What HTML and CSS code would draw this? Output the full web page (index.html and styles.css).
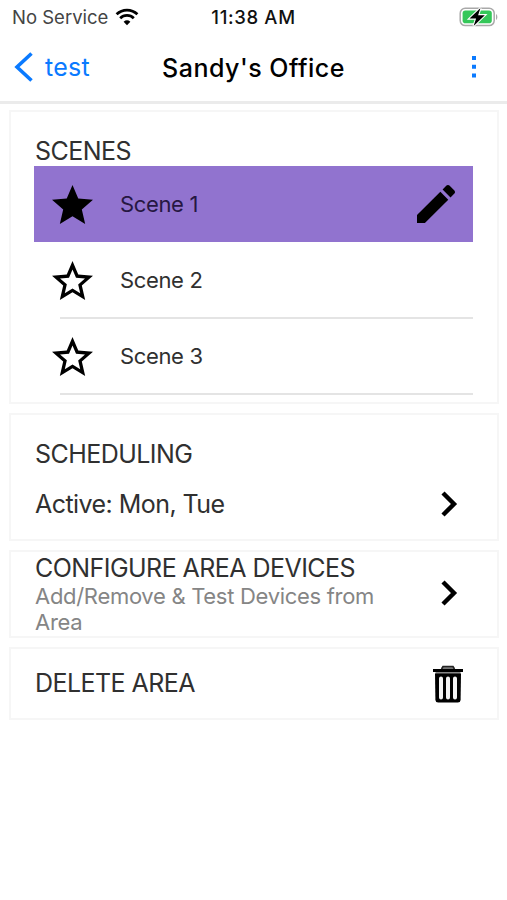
FILE: index.html
```html
<!DOCTYPE html>
<html lang="en">
<head>
    <meta charset="UTF-8">
    <meta name="viewport" content="width=device-width, initial-scale=1.0">
    <title>Sandy's Office</title>
    <link rel="stylesheet" href="styles.css">
</head>
<body>
    <!-- Status Bar -->
    <div class="status-bar">
        <div class="carrier">
            <span class="carrier-name">No Service</span>
            <svg class="wifi" width="24" height="18" viewBox="0 0 24 18">
                <path d="M1.6 6.3A15 15 0 0 1 22.4 6.3M5.2 10.2A9.8 9.8 0 0 1 18.8 10.2" fill="none" stroke="#000" stroke-width="2.8"/>
                <path d="M12 17.2L8.6 13.8A5.2 5.2 0 0 1 15.4 13.8Z"/>
            </svg>
        </div>
        <span class="time">11:38 AM</span>
        <svg class="battery" width="40" height="22" viewBox="0 0 40 22">
            <rect x="1.2" y="2.2" width="34" height="17.4" rx="5" fill="#fff" stroke="#a9a9a9" stroke-width="1.5"/>
            <rect x="3.6" y="4.6" width="29.2" height="12.6" rx="2.8" fill="#34c759"/>
            <path d="M37 8v6c1.8-.8 1.8-5.2 0-6z" fill="#a9a9a9"/>
            <path d="M21.5 2L10.5 12.6h6.6L14.6 20 25.8 9.2h-6.7z" stroke="#fff" stroke-width="2.2" paint-order="stroke"/>
        </svg>
    </div>

    <!-- Navigation -->
    <div class="navbar">
        <a class="back">
            <svg width="20" height="32" viewBox="0 0 20 32">
                <path d="M17.5 2.5L3 16l14.5 13.5" fill="none" stroke="#0a7aff" stroke-width="3.6"/>
            </svg>
            <span>test</span>
        </a>
        <h1>Sandy's Office</h1>
        <svg class="more" width="6" height="24" viewBox="0 0 6 24">
            <path d="M1 1h4v4H1zM1 9.7h4v4H1zM1 18.4h4v4H1z" fill="#0a7aff"/>
        </svg>
    </div>

    <div class="content">
        <!-- Scenes -->
        <div class="card scenes">
            <h2>SCENES</h2>
            <ul>
                <li class="scene active">
                    <svg class="star" width="41" height="39" viewBox="2 2 20 19">
                        <path d="M12 17.27L18.18 21l-1.63-7.03L22 9.24l-7.19-.61L12 2 9.19 8.63 2 9.24l5.46 4.73L5.82 21z"/>
                    </svg>
                    <span>Scene 1</span>
                    <svg class="pencil" width="38" height="38" viewBox="3 3 18 18">
                        <path d="M3 17.25V21h3.75L17.81 9.94l-3.75-3.75zM20.71 7.04c.39-.39.39-1.02 0-1.41l-2.34-2.34c-.39-.39-1.02-.39-1.41 0l-1.83 1.83 3.75 3.75z"/>
                    </svg>
                </li>
                <li class="scene">
                    <svg class="star" width="41" height="39" viewBox="2 2 20 19">
                        <path d="M22 9.24l-7.19-.62L12 2 9.19 8.63 2 9.24l5.46 4.73L5.82 21 12 17.27 18.18 21l-1.63-7.03zM12 15.4l-3.76 2.27 1-4.28-3.32-2.88 4.38-.38L12 6.1l1.71 4.04 4.38.38-3.32 2.88 1 4.28z"/>
                    </svg>
                    <span>Scene 2</span>
                </li>
                <li class="scene">
                    <svg class="star" width="41" height="39" viewBox="2 2 20 19">
                        <path d="M22 9.24l-7.19-.62L12 2 9.19 8.63 2 9.24l5.46 4.73L5.82 21 12 17.27 18.18 21l-1.63-7.03zM12 15.4l-3.76 2.27 1-4.28-3.32-2.88 4.38-.38L12 6.1l1.71 4.04 4.38.38-3.32 2.88 1 4.28z"/>
                    </svg>
                    <span>Scene 3</span>
                </li>
            </ul>
        </div>

        <!-- Scheduling -->
        <div class="card scheduling">
            <h2>SCHEDULING</h2>
            <div class="row">
                <p class="days">Active: Mon, Tue</p>
                <svg class="chevron" width="18" height="26" viewBox="0 0 18 26">
                    <path d="M3 2l11 11L3 24" fill="none" stroke="#000" stroke-width="4.4"/>
                </svg>
            </div>
        </div>

        <!-- Configure -->
        <div class="card configure">
            <div class="configure-text">
                <h2>CONFIGURE AREA DEVICES</h2>
                <p>Add/Remove &amp; Test Devices from Area</p>
            </div>
            <svg class="chevron" width="18" height="26" viewBox="0 0 18 26">
                <path d="M3 2l11 11L3 24" fill="none" stroke="#000" stroke-width="4.4"/>
            </svg>
        </div>

        <!-- Delete -->
        <div class="card delete">
            <h2>DELETE AREA</h2>
            <svg class="trash" width="30" height="38" viewBox="0 0 30 38">
                <path d="M8.5 4L10 1.5h10L21.5 4" fill="#777" stroke="#222" stroke-width="1.6"/>
                <path d="M0 4h30v3H0z"/>
                <path d="M2.5 7h25v2h-25z" fill="#888"/>
                <path d="M2 8.5h26L27.6 35q-.2 2.5-2.8 2.5H5.2Q2.6 37.5 2.4 35z"/>
                <path d="M8 13.5v19M15 13.5v19M22 13.5v19" stroke="#f4f4f4" stroke-width="4" stroke-linecap="round"/>
            </svg>
        </div>
    </div>
</body>
</html>
```
FILE: styles.css
```css
/* General Styling */
* {
    margin: 0;
    padding: 0;
    box-sizing: border-box;
}

body {
    font-family: Inter, 'Liberation Sans', sans-serif;
    background-color: #fff;
    color: #303030;
}

/* Status Bar */
.status-bar {
    display: grid;
    grid-template-columns: 1fr auto 1fr;
    align-items: center;
    height: 34px;
    padding: 0 8px;
    font-size: 18.5px;
}

.carrier {
    display: flex;
    align-items: center;
    gap: 7px;
    padding-left: 4px;
    color: #444;
}

.time {
    color: #111;
    font-weight: 500;
    letter-spacing: 0.65px;
}

.battery {
    justify-self: end;
}

/* Navigation */
.navbar {
    display: grid;
    grid-template-columns: 1fr auto 1fr;
    align-items: center;
    height: 70px;
    padding: 0 14px 1px;
    border-bottom: 3px solid #ebebeb;
}

.back {
    display: flex;
    align-items: center;
    gap: 11px;
    color: #0a7aff;
    font-size: 25px;
    letter-spacing: 0.3px;
}

.navbar h1 {
    padding-top: 1px;
    color: #000;
    font-size: 25px;
    font-weight: 500;
    letter-spacing: 0.5px;
}

.more {
    justify-self: end;
    margin-right: 16px;
}

/* Cards */
.content {
    display: flex;
    flex-direction: column;
    gap: 9px;
    padding: 6px 8px 0 9px;
}

.card {
    border: 2px solid #f6f6f6;
    padding: 0 24px;
}

h2, .days {
    font-size: 25px;
    font-weight: 400;
    line-height: 30px;
    letter-spacing: -0.55px;
}

/* Scenes */
.scenes {
    height: 294px;
    padding-top: 24px;
    padding-left: 23px;
}

.scenes h2 {
    padding-left: 1px;
}

ul {
    list-style: none;
}

.scene {
    display: flex;
    align-items: center;
    height: 76px;
    padding: 0 18px 0 17.5px;
    font-size: 22px;
    letter-spacing: -0.35px;
    background: linear-gradient(#e4e4e4, #e4e4e4) right bottom / calc(100% - 26px) 2px no-repeat;
}

.scene:nth-child(2) {
    height: 77px;
    padding-bottom: 1px;
}

.scene:nth-child(3) {
    padding-bottom: 2px;
}

.scene span {
    margin-left: 27.5px;
}

.scene.active {
    background: #9173cf;
    color: #261742;
}

.pencil {
    margin-left: auto;
}

/* Scheduling */
.scheduling {
    height: 128px;
    padding-top: 24px;
}

.row {
    display: flex;
    justify-content: space-between;
    align-items: center;
    margin-top: 20px;
}

.chevron {
    flex: none;
    margin-right: 15px;
}

/* Configure */
.configure {
    display: flex;
    justify-content: space-between;
    align-items: center;
    height: 88px;
}

.configure .chevron {
    margin-bottom: 2px;
}

.configure p {
    color: #858585;
    font-size: 22px;
    line-height: 26px;
    letter-spacing: -0.3px;
}

.configure-text {
    width: 350px;
    padding-bottom: 1px;
}

/* Delete */
.delete {
    display: flex;
    justify-content: space-between;
    align-items: center;
    height: 73px;
}

.delete h2 {
    padding-bottom: 2px;
}

.trash {
    margin-right: 10px;
}
```
